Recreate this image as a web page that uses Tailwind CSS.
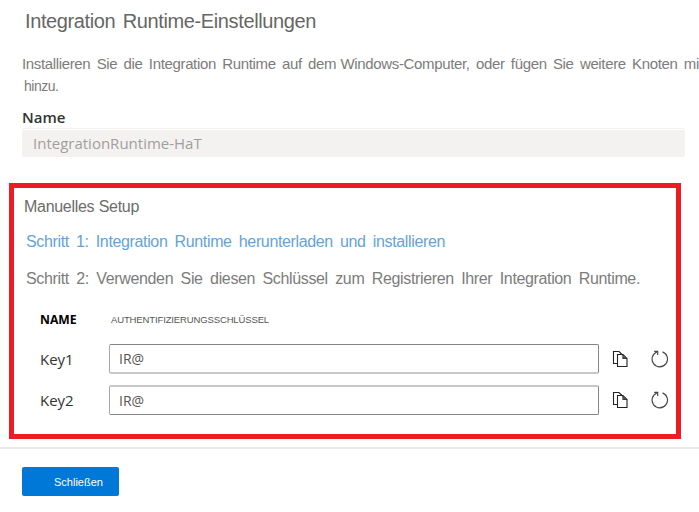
<!DOCTYPE html>
<html lang="de">
<head>
<meta charset="utf-8">
<title>Integration Runtime-Einstellungen</title>
<script src="https://cdn.jsdelivr.net/npm/@tailwindcss/browser@4"></script>
</head>
<body class="bg-white">
<svg class="hidden">
  <symbol id="copy" viewBox="0 0 16 18"><path d="M5 13.5H1.500V1.500H7L10.500 5M5.500 4.500H11L15 8.500V16.500H5.500ZM11 4.500V8.500H15" fill="none" stroke="#222" stroke-width="1.1"/><path d="M11 5L14.500 8.500H11Z" fill="#555"/></symbol>
  <symbol id="refresh" viewBox="0 0 18 18"><path d="M11.500 1.900A7.700 7.700 0 1 1 5.800 2M3.200 1.300H6.700V5" fill="none" stroke="#444" stroke-width="1.15"/></symbol>
</svg>
<main class="flex h-[512px] w-[699px] flex-col overflow-hidden font-['Liberation_Sans',Arial,sans-serif] text-[#7c7c7c]">
  <h1 class="mt-[9px] ml-[25px] h-6 w-[291px] text-[20px] leading-6 tracking-[-0.38px] whitespace-nowrap text-[#666] [text-align-last:justify]">Integration Runtime-Einstellungen</h1>
  <p class="mt-[21px] ml-[22px] h-5 w-[677px] text-[15px] leading-5 tracking-[-0.35px] whitespace-nowrap [text-align-last:justify]">Installieren Sie die Integration Runtime auf dem <span class="-ml-[2px]">Windows-Computer,</span> oder fügen Sie weitere Knoten mi</p>
  <p class="mt-0.5 ml-6 h-5 text-[14px] leading-5 tracking-[-0.5px]">hinzu.</p>
  <label class="mt-[11px] mb-px ml-[22px] h-5 font-['Open_Sans',sans-serif] text-[15px] leading-5 font-semibold text-[#333]">Name</label>
  <div class="ml-[22px] flex h-[29px] w-[663px] shrink-0 items-center rounded-xs bg-[#f3f2f1] pt-0.5 pl-[11px] font-['Open_Sans',sans-serif] text-[15px] text-[#a19f9d] shadow-[inset_0_1px_#f3f2f1,inset_0_2px_#fff]">IntegrationRuntime-HaT</div>
  <section class="mt-[26px] ml-[9px] flex h-[256px] w-[672px] shrink-0 flex-col border-5 border-[#ed1c24]">
    <h2 class="mt-[9px] ml-[10px] h-5 w-[115px] text-[16px] leading-5 tracking-[-0.3px] whitespace-nowrap text-[#6c6c6c] [text-align-last:justify]">Manuelles Setup</h2>
    <a class="mt-[15px] ml-3 h-5 w-[419px] text-[16px] leading-5 tracking-[-0.36px] whitespace-nowrap text-[#62a4da] [text-align-last:justify]">Schritt 1: Integration Runtime herunterladen und installieren</a>
    <p class="mt-[17px] ml-3 h-5 w-[614px] text-[16px] leading-5 tracking-[-0.36px] whitespace-nowrap [text-align-last:justify]">Schritt 2: Verwenden Sie diesen Schlüssel zum Registrieren Ihrer Integration Runtime.</p>
    <div class="mt-[21px] ml-[26px] flex h-5 items-center">
      <span class="w-[71px] font-['Open_Sans',sans-serif] text-[12.200px] font-bold text-black">NAME</span>
      <span class="text-[9.500px] tracking-[-0.13px] text-[#555]">AUTHENTIFIZIERUNGSSCHLÜSSEL</span>
    </div>
    <div class="mt-[14px] ml-[26px] flex h-[30px] items-center">
      <span class="w-[69px] pt-px font-['Open_Sans',sans-serif] text-[15px] text-[#333]">Key1</span>
      <div class="flex h-[30px] w-[490px] items-center rounded-xs border border-[#858585] border-b-2 border-l-[#a8a8a8] border-b-[#c8c8c8] pl-[9px] font-['Open_Sans',sans-serif] text-[14px] text-[#555]">IR@</div>
      <svg class="ml-[13px] h-[18px] w-4"><use href="#copy"/></svg>
      <svg class="ml-[23px] h-[18px] w-[18px]"><use href="#refresh"/></svg>
    </div>
    <div class="mt-[11px] ml-[26px] flex h-[30px] items-center">
      <span class="w-[69px] pt-px font-['Open_Sans',sans-serif] text-[15px] text-[#333]">Key2</span>
      <div class="flex h-[30px] w-[490px] items-center rounded-xs border border-[#858585] border-t-2 border-l-[#a8a8a8] border-t-[#c8c8c8] pl-[9px] font-['Open_Sans',sans-serif] text-[14px] text-[#555]">IR@</div>
      <svg class="ml-[13px] h-[18px] w-4"><use href="#copy"/></svg>
      <svg class="ml-[23px] h-[18px] w-[18px]"><use href="#refresh"/></svg>
    </div>
  </section>
  <footer class="mt-2 border-t-2 border-[#eaeaea] pt-[18px] pl-[22px]">
    <button class="flex h-[29px] w-[97px] items-center rounded-xs bg-[#0078d7] pt-0.5 pl-8 text-[11px] text-white">Schließen</button>
  </footer>
</main>
</body>
</html>
